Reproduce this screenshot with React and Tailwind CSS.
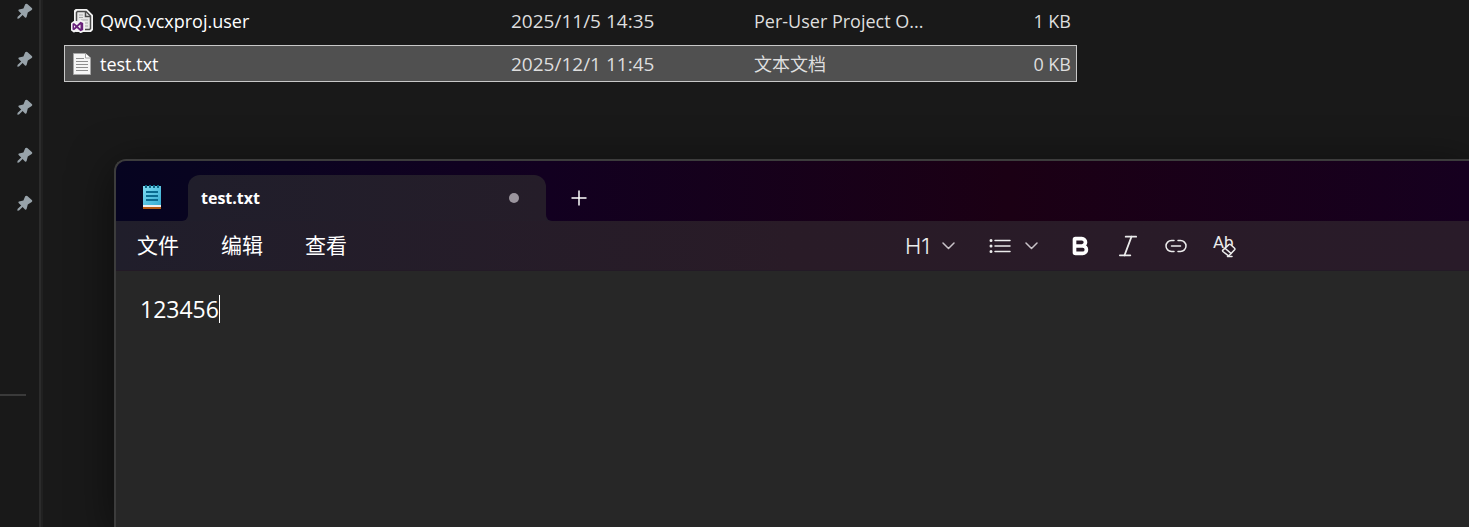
import { Bold, Italic } from 'lucide-react';

const files = [
    { name: 'QwQ.vcxproj.user', date: '2025/11/5 14:35', type: 'Per-User Project O...', size: '1 KB', Icon: ProjectFileIcon },
    { name: 'test.txt', date: '2025/12/1 11:45', type: '文本文档', size: '0 KB', Icon: TextFileIcon, selected: true },
];

const pins = ['pin-1', 'pin-2', 'pin-3', 'pin-4', 'pin-5'];

function PinIcon() {
    return (
        <svg width="16" height="16" viewBox="0 0 16 16" fill="#98a3aa" aria-hidden="true">
            <path d="M8.2 1.2Q9.2.2 10.3 1.1L14.8 5Q16 6.2 14.7 7L10.8 9.4L9.6 14Q9 15.2 8 14.4L5.6 12L2 15.6L.4 15.8L.5 14.1L4.2 10.6L1.6 8Q.9 7 2 6.6L6.4 5.4Z" />
        </svg>
    );
}

function ProjectFileIcon() {
    return (
        <svg width="22" height="24" viewBox="0 0 22 24" fill="none" aria-hidden="true">
            <path d="M5 1h10.500L21 6.500V20.500L19.500 22H5L4 21V2z" fill="#e8e8e8" stroke="#f4f4f4" strokeWidth="2" strokeLinejoin="round" />
            <path d="M5.500 12V3.500L6.500 2.500H15L19.500 7V19.500L18.500 20.500H14" stroke="#4a4a4a" strokeWidth="1.500" />
            <path d="M14.500 2.500V7.500H19.500" stroke="#4a4a4a" strokeWidth="1.500" />
            <path d="M8 6h4M8 8.500h4M10 11h7M14 14h3M14 17h3" stroke="#a8a8a8" />
            <path d="M1 14.500L3 13L6 15L9.500 12L13 13.500V21.500L9.500 23L6 20.500L3 22.500L1 21z" fill="#f4f4f4" stroke="#f4f4f4" strokeWidth="2" strokeLinejoin="round" />
            <path d="M9.500 12.800L12.200 14V21L9.500 22.200L5.800 19L3 21.200L1.500 20.500V14.700L3 14L5.800 16.200zM9.500 15.500L7 17.600L9.500 19.700zM3 16.200V19L4.400 17.600z" fill="#68217a" fillRule="evenodd" />
        </svg>
    );
}

function TextFileIcon() {
    return (
        <svg width="18" height="22" viewBox="0 0 18 22" aria-hidden="true">
            <path d="M.5.5H12.500L17.500 5V21.500H.5z" fill="#f5f5f5" stroke="#a5a5a5" />
            <path d="M12.500.5V5H17.500" fill="#fff" stroke="#a5a5a5" />
            <path d="M3 5.500h8M3 8.500h12M3 11.500h12M3 14.500h12M3 17.500h12" stroke="#8e8e8e" />
        </svg>
    );
}

function NotepadIcon() {
    return (
        <svg width="18" height="24" viewBox="0 0 18 24" aria-hidden="true">
            <defs>
                <linearGradient id="page" x1="0" y1="0" x2="1" y2="1">
                    <stop offset="0" stopColor="#7fdcf2" />
                    <stop offset="1" stopColor="#36acd2" />
                </linearGradient>
            </defs>
            <path d="M0 21h18v3H0z" fill="#b55a12" />
            <path d="M0 19h18v3H0z" fill="#f1eeee" />
            <path d="M0 1h18v19H0z" fill="url(#page)" />
            <path d="M3 0v3M7 0v3M11 0v3M15 0v3" stroke="#0d6685" strokeWidth="2" />
            <path d="M3 7h12M3 11h12M3 15h12" stroke="#0a6b90" strokeWidth="2" />
        </svg>
    );
}

function ChevronIcon() {
    return (
        <svg width="13" height="8" viewBox="0 0 13 8" fill="none" stroke="#c9c3c8" strokeWidth="1.500" strokeLinecap="round" strokeLinejoin="round" aria-hidden="true">
            <path d="M1 1L6.500 6.500L12 1" />
        </svg>
    );
}

function ListIcon() {
    return (
        <svg width="22" height="16" viewBox="0 0 22 16" fill="none" stroke="currentColor" aria-hidden="true">
            <path d="M6 2.500h15M6 8h15M6 13.500h15" strokeWidth="1.500" strokeLinecap="round" />
            <path d="M2 2.500h.01M2 8h.01M2 13.500h.01" strokeWidth="3" strokeLinecap="round" />
        </svg>
    );
}

function LinkIcon() {
    return (
        <svg width="22" height="14" viewBox="0 0 22 14" fill="none" stroke="currentColor" strokeWidth="1.500" strokeLinecap="round" aria-hidden="true">
            <path d="M9 1.500H6.500a5.500 5.500 0 0 0 0 11H9M13 1.500h2.500a5.500 5.500 0 0 1 0 11H13M6.500 7h9" />
        </svg>
    );
}

function ClearFormatIcon() {
    return (
        <svg width="24" height="24" viewBox="0 0 24 24" className="overflow-visible" aria-hidden="true">
            <text x="1" y="14" fontSize="17" fill="currentColor" fontFamily="Roboto, sans-serif">Ab</text>
            <path d="M18.500 10.500L22.600 14.200Q23.300 15 22.600 15.800L17.400 21.200Q16.500 22 15.600 21.200L10.900 17.500Q10.200 16.800 10.900 16.100L16.900 10.600Q17.700 9.900 18.500 10.500z" fill="#291b28" stroke="currentColor" strokeWidth="1.500" />
            <path d="M13 14.200L19 19.400M15.500 22.500H20" fill="none" stroke="currentColor" strokeWidth="1.500" strokeLinecap="round" />
        </svg>
    );
}

const Explorer = () => (
    <div className="flex min-h-screen">
        <aside className="w-[41px] shrink-0 border-r-2 border-[#2b2b2b]">
            <ul className="flex flex-col gap-8 pt-[3px] pl-[17px]">
                {pins.map((pin) => (
                    <li key={pin}><PinIcon /></li>
                ))}
            </ul>
            <hr className="mt-[183px] w-[26px] border-t-2 border-[#3a3a3a]" />
        </aside>
        <main className="flex-1 border-l-2 border-[#202020] pl-[21px]">
            <table className="-mt-1 w-[1013px] table-fixed border-separate border-spacing-x-0 border-spacing-y-[6px] text-left text-[18px] text-[#dedede]">
                <colgroup>
                    <col className="w-[440px]" />
                    <col className="w-[243px]" />
                    <col className="w-[200px]" />
                    <col />
                </colgroup>
                <tbody>
                    {files.map(({ name, date, type, size, Icon, selected }) => (
                        <tr key={name} className={selected ? 'h-[37px] bg-[#505050] outline-1 -outline-offset-1 outline-[#c8c8c8]' : 'h-[37px]'}>
                            <td className="p-0 pt-px pl-[7px] text-white">
                                <div className="flex items-center">
                                    <span className="mr-[7px] flex w-[22px] justify-center"><Icon /></span>
                                    {name}
                                </div>
                            </td>
                            <td className="p-0 pt-px pl-[7px] text-[19px]">{date}</td>
                            <td className="p-0 pt-px pl-[7px]">{type}</td>
                            <td className="p-0 pt-px pr-[6px] text-right">{size}</td>
                        </tr>
                    ))}
                </tbody>
            </table>
        </main>
    </div>
);

const TabBar = () => (
    <header className="flex h-[60px] bg-linear-to-r from-[#201d2b] to-[#281c27]">
        <div className="flex w-[72px] items-center rounded-br-md bg-linear-to-r from-[#060420] to-[#080420] pt-3 pl-[27px]">
            <NotepadIcon />
        </div>
        <div className="w-[358px] bg-linear-to-r from-[#080420] to-[#120020] pt-[14px]">
            <div className="flex h-full items-center justify-between rounded-t-xl bg-linear-to-r from-[#201e2b] to-[#251d29] pr-[27px] pl-[13px]">
                <span className="text-[16px] font-bold text-white">test.txt</span>
                <span className="size-[10px] rounded-full bg-[#9b959e]" />
            </div>
        </div>
        <div className="flex flex-1 items-center rounded-bl-md bg-linear-to-r from-[#120020] via-[#1b0014] to-[#16001f] pt-[14px] pl-[25px]">
            <button type="button" aria-label="New tab" className="text-white">
                <svg width="16" height="16" viewBox="0 0 16 16" stroke="currentColor" strokeWidth="1.500">
                    <path d="M8 .5v15M.5 8h15" />
                </svg>
            </button>
        </div>
    </header>
);

const Toolbar = () => (
    <div className="flex h-[50px] items-center border-b border-[#231a26] bg-linear-to-r from-[#201e2b] via-[#291b27] to-[#291b29] pr-[233px] pl-[21px] text-[#ececec]">
        <nav className="flex flex-1 gap-[42px] text-[21px] text-white">
            <button type="button">文件</button>
            <button type="button">编辑</button>
            <button type="button">查看</button>
        </nav>
        <div className="flex items-center gap-[34px]">
            <button type="button" aria-label="Heading" className="flex items-center gap-3 font-[Inter] text-[22px] leading-6 font-light">
                H1
                <ChevronIcon />
            </button>
            <button type="button" aria-label="List" className="flex items-center gap-[14px]">
                <ListIcon />
                <ChevronIcon />
            </button>
            <div className="-ml-1 flex items-center gap-6">
                <button type="button" aria-label="Bold" className="flex size-6 items-center justify-center text-white"><Bold size={22} strokeWidth={4} /></button>
                <button type="button" aria-label="Italic" className="flex size-6 items-center justify-center"><Italic size={28} strokeWidth={1.5} className="shrink-0" /></button>
                <button type="button" aria-label="Link" className="flex size-6 items-center justify-center"><LinkIcon /></button>
                <button type="button" aria-label="Clear formatting" className="flex size-6 items-center justify-center"><ClearFormatIcon /></button>
            </div>
        </div>
    </div>
);

// the editor floats over the file list and runs off the right and bottom edges
const Notepad = () => (
    <section className="absolute top-[159px] right-0 bottom-0 left-[114px] flex flex-col overflow-hidden rounded-tl-xl border-t-2 border-l-2 border-[#3c3c3c] bg-[#272727] shadow-[0_8px_44px_rgba(0,0,0,0.55)]">
        <TabBar />
        <Toolbar />
        <div className="flex flex-1 items-start pt-6 pl-6">
            <textarea aria-label="Editor" rows={1} defaultValue="123456" className="field-sizing-content resize-none overflow-hidden text-[23px] leading-7 text-white outline-none" />
            <span className="h-7 w-px bg-white" />
        </div>
    </section>
);

const App = () => {
    return (
        <div className="relative min-h-screen overflow-hidden bg-[#191919] font-['Open_Sans','Noto_Sans_CJK_SC',sans-serif]">
            <Explorer />
            <Notepad />
        </div>
    );
};

export default App;
